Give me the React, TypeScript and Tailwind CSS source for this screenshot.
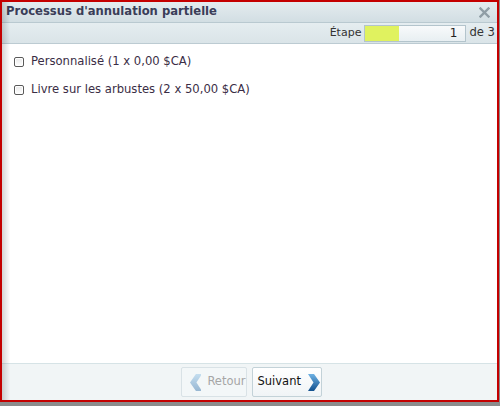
import React from 'react';

const font = { fontFamily: 'Tahoma, "DejaVu Sans", Verdana, sans-serif' };

const ChevronLeft = ({ faded }: { faded?: boolean }) => (
  <svg width="12" height="17" viewBox="0 0 12 17" className={faded ? 'opacity-45' : ''}>
    <defs>
      <linearGradient id="chl" x1="0" y1="0" x2="0" y2="1">
        <stop offset="0" stopColor="#8cc0e6" />
        <stop offset="1" stopColor="#2a6aa6" />
      </linearGradient>
    </defs>
    <path d="M6 0 L12 0 L6.5 8.5 L12 17 L6 17 L0 8.5 Z" fill="url(#chl)" />
  </svg>
);

const ChevronRight = () => (
  <svg width="12" height="17" viewBox="0 0 12 17">
    <defs>
      <linearGradient id="chr" x1="0" y1="0" x2="0" y2="1">
        <stop offset="0" stopColor="#6fb2e4" />
        <stop offset="1" stopColor="#12508e" />
      </linearGradient>
    </defs>
    <path d="M6 0 L0 0 L5.5 8.5 L0 17 L6 17 L12 8.5 Z" fill="url(#chr)" />
  </svg>
);

const CloseIcon = () => (
  <svg width="11" height="11" viewBox="0 0 11 11">
    <path d="M1.5 1.5 L9.5 9.5 M9.5 1.5 L1.5 9.5" stroke="#909ea6" strokeWidth="2.4" strokeLinecap="square" />
  </svg>
);

const Item = ({ label }: { label: string }) => (
  <label className="flex items-center gap-[7px] h-[28px]">
    <span className="w-[10px] h-[10px] border border-[#5a5a5a] rounded-[2px] bg-gradient-to-b from-[#e8e8e8] to-[#ffffff] shadow-[inset_0_0_0_1px_#fff]" />
    <span className="text-[11.6px] text-[#3a2d45]">{label}</span>
  </label>
);

export default function App() {
  return (
    <div className="w-[500px] h-[406px] bg-[#8c8c8c]" style={font}>
      <div className="w-[499px] h-[402px] border-2 border-[#c40000] bg-white flex flex-col relative">
        <div className="absolute left-0 top-0 bottom-0 w-[8px] bg-gradient-to-r from-[#0000002a] to-transparent pointer-events-none" />
        {/* Title bar */}
        <div className="h-[21px] shrink-0 flex items-center justify-between pl-[4px] pr-[7px] bg-gradient-to-b from-[#e4ecef] to-[#d2dee3] border-b border-[#b9c9d0]">
          <span className="text-[11.6px] font-bold text-[#3a3d58] leading-none">Processus d'annulation partielle</span>
          <CloseIcon />
        </div>
        {/* Toolbar */}
        <div className="h-[21px] shrink-0 flex items-center justify-end gap-[3px] pr-[2px] bg-gradient-to-b from-[#e5edf0] to-[#dae4e8] border-b border-[#bccbd2]">
          <span className="text-[11px] text-[#333]">Étape</span>
          <div className="w-[102px] h-[17px] border border-[#b3c4cc] flex">
            <div className="w-[34px] bg-[#e0f25f]" />
            <div className="flex-1 bg-gradient-to-b from-[#f8fafb] to-[#e8eff2] text-right pr-[8px] text-[12px] leading-[15px] text-[#222]">1</div>
          </div>
          <span className="text-[11.6px] text-[#333]">de 3</span>
        </div>
        {/* Content */}
        <div className="flex-1 flex flex-col pl-[12px] pt-[4px]">
          <Item label="Personnalisé (1 x 0,00 $CA)" />
          <Item label="Livre sur les arbustes (2 x 50,00 $CA)" />
        </div>
        {/* Footer */}
        <div className="h-[37px] shrink-0 border-t border-[#d6e3e6] bg-[#f1f5f6] flex items-center justify-center gap-[5px] pl-[3px]">
          <button className="w-[66px] h-[30px] border border-[#d9e2e6] rounded-[2px] bg-[#f3f7f8] flex items-center gap-[6px] pl-[8px] text-[11.5px] text-[#a6a6a6]">
            <ChevronLeft faded />
            Retour
          </button>
          <button className="w-[70px] h-[30px] border border-[#c3d2d8] rounded-[2px] bg-gradient-to-b from-[#ffffff] to-[#f0f4f6] flex items-center gap-[7px] pl-[5px] text-[11.5px] text-[#111]">
            Suivant
            <ChevronRight />
          </button>
        </div>
      </div>
    </div>
  );
}
